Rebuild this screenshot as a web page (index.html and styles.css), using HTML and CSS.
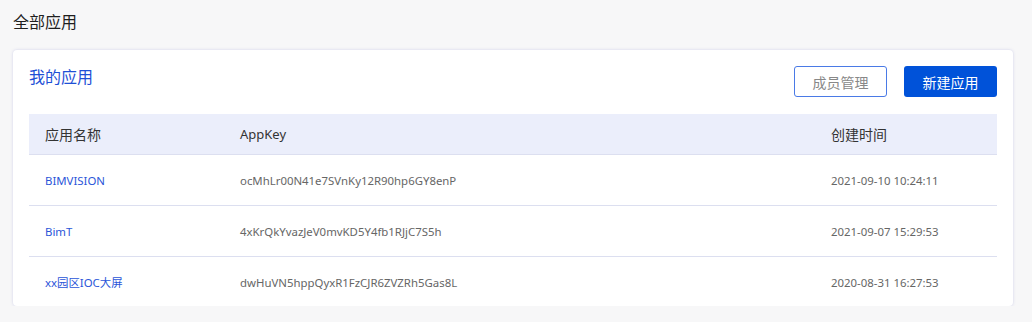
FILE: index.html
```html
<!DOCTYPE html>
<html lang="zh-CN">
<head>
  <meta charset="UTF-8">
  <title>全部应用</title>
  <link rel="stylesheet" href="styles.css">
</head>
<body>

  <h2 class="page-title">全部应用</h2>

  <div class="card">
    <div class="card-head">
      <span class="card-title">我的应用</span>
      <div class="actions">
        <button class="btn btn-outline">成员管理</button>
        <button class="btn btn-primary">新建应用</button>
      </div>
    </div>

    <!-- 应用列表 -->
    <table class="app-table">
      <thead>
        <tr>
          <th class="col-name">应用名称</th>
          <th class="col-key">AppKey</th>
          <th class="col-time">创建时间</th>
        </tr>
      </thead>
      <tbody>
        <tr>
          <td><a href="#">BIMVISION</a></td>
          <td>ocMhLr00N41e7SVnKy12R90hp6GY8enP</td>
          <td>2021-09-10 10:24:11</td>
        </tr>
        <tr>
          <td><a href="#">BimT</a></td>
          <td>4xKrQkYvazJeV0mvKD5Y4fb1RJjC7S5h</td>
          <td>2021-09-07 15:29:53</td>
        </tr>
        <tr>
          <td><a href="#">xx园区IOC大屏</a></td>
          <td>dwHuVN5hppQyxR1FzCJR6ZVZRh5Gas8L</td>
          <td>2020-08-31 16:27:53</td>
        </tr>
      </tbody>
    </table>
  </div>

</body>
</html>
```

FILE: styles.css
```css
body {
  margin: 0;
  padding: 10px 19px 0 13px;
  background-color: #f7f7f8;
  font-family: "Noto Sans", "Noto Sans CJK SC", sans-serif;
  color: #333;
}

.page-title {
  margin: 0 0 16px;
  font-size: 16px;
  font-weight: normal;
  line-height: 24px;
  color: #1f1f1f;
}

.card {
  background: white;
  border-radius: 4px;
  box-shadow: 0 0 3px rgba(90, 100, 190, 0.25);
  padding: 16px 16px 0;
  height: 240px;
}

.card-head {
  display: flex;
  justify-content: space-between;
  align-items: flex-start;
  height: 48px;
}

.card-title {
  font-size: 16px;
  line-height: 24px;
  color: #1e50d6;
  margin-top: -1px;
}

.actions {
  display: flex;
  gap: 17px;
}

.btn {
  width: 93px;
  height: 31px;
  border-radius: 3px;
  font-family: inherit;
  font-size: 14px;
  cursor: pointer;
}

.btn-outline {
  background: white;
  border: 1px solid #4a7ae6;
  color: #888;
}

.btn-primary {
  background-color: #0052d9;
  border: none;
  color: white;
}

.app-table {
  width: 100%;
  border-collapse: collapse;
}

.app-table th {
  background-color: #ebeefb;
  height: 40px;
  padding: 0 16px;
  text-align: left;
  font-size: 14px;
  font-weight: normal;
  color: #333;
  border-bottom: 1px solid #dcdff0;
}

.app-table th.col-key {
  font-size: 13px;
}

.col-name {
  width: 163px;
}

.col-time {
  width: 150px;
}

.app-table td {
  height: 50px;
  padding: 0 16px;
  font-size: 11.4px;
  color: #666;
  border-bottom: 1px solid #dcdff0;
}

.app-table tbody tr:last-child td {
  border-bottom: none;
}

.app-table a {
  color: #2a55d8;
  text-decoration: none;
}
```
